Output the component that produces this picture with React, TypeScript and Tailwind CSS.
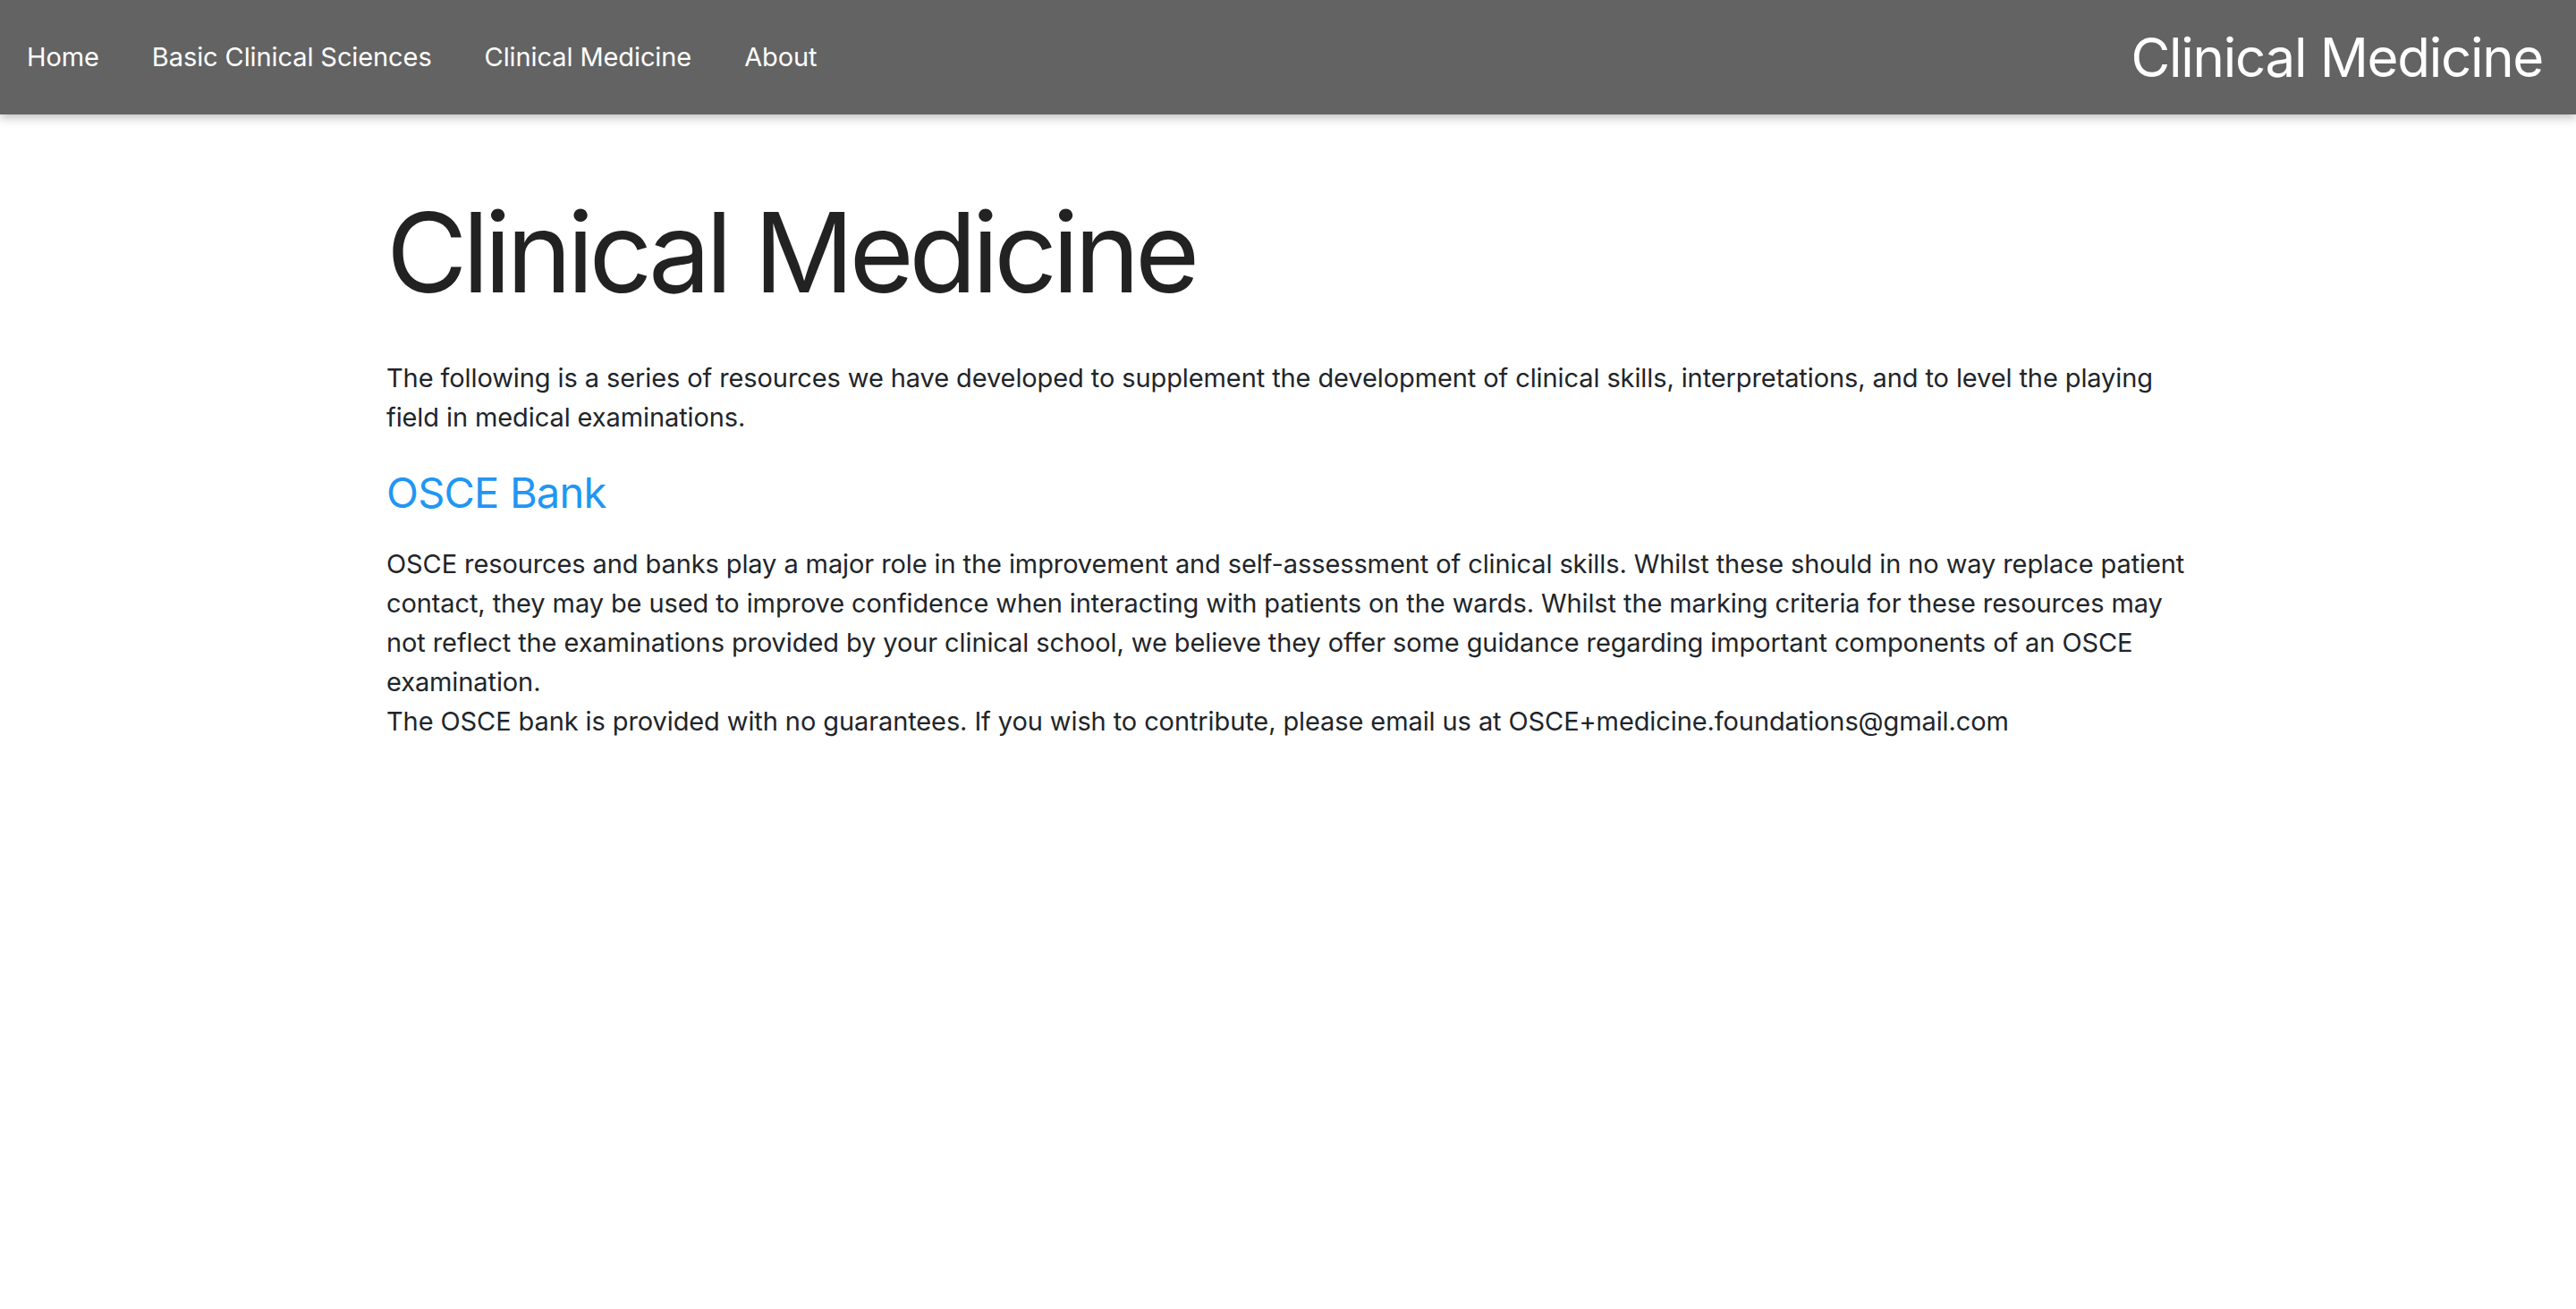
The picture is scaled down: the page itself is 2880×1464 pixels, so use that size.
const NAV_LINKS = ["Home", "Basic Clinical Sciences", "Clinical Medicine", "About"]

export default function App() {
  return (
    <div className="min-h-screen bg-white font-['Inter',sans-serif] text-[#212529]">
      {/* Top bar */}
      <nav className="flex h-[128px] items-center justify-between bg-[#636363] pl-[30px] pr-[37px] shadow-[0_4px_10px_rgba(0,0,0,0.25)]">
        <ul className="flex items-center gap-[59px]">
          {NAV_LINKS.map((label) => (
            <li key={label}>
              <a href="#" className="text-[29px] tracking-[-0.1px] text-white">
                {label}
              </a>
            </li>
          ))}
        </ul>
        <span className="text-[60px] tracking-[-1.3px] text-white">Clinical Medicine</span>
      </nav>

      {/* Content */}
      <main className="mx-auto w-[2016px] pt-[80px]">
        <h1 className="text-[124px] leading-[1.2] tracking-[-5.5px] text-[#222]">Clinical Medicine</h1>

        <p className="mt-[44px] text-[29px] leading-[44px] tracking-[-0.1px]">
          The following is a series of resources we have developed to supplement the development of clinical skills,
          interpretations, and to level the playing field in medical examinations.
        </p>

        <h2 className="mt-[34px] text-[47px] leading-[1.2] tracking-[-0.8px] text-[#2196f3]">OSCE Bank</h2>

        <p className="mt-[30px] text-[29px] leading-[44px] tracking-[-0.1px]">
          OSCE resources and banks play a major role in the improvement and self-assessment of clinical skills. Whilst
          these should in no way replace patient contact, they may be used to improve confidence when interacting with
          patients on the wards. Whilst the marking criteria for these resources may not reflect the examinations
          provided by your clinical school, we believe they offer some guidance regarding important components of an
          OSCE examination.
          <br />
          The OSCE bank is provided with no guarantees. If you wish to contribute, please email us at
          OSCE+medicine.foundations@gmail.com
        </p>
      </main>
    </div>
  )
}
